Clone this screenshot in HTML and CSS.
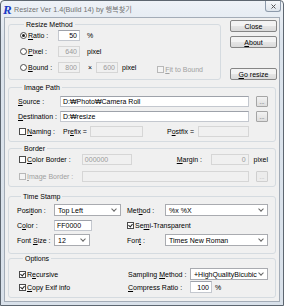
FILE: index.html
```html
<!DOCTYPE html>
<html lang="ko">
<head>
  <meta charset="UTF-8">
  <title>Resizer</title>
  <link rel="stylesheet" href="styles.css">
</head>
<body>
  <div class="window">
    <div class="titlebar">
      <span class="app-icon">R</span>
      <span class="title">Resizer Ver 1.4(Build 14) by 행복찾기</span>
      <span class="close-x">
        <svg width="5" height="5" viewBox="0 0 5 5"><path d="M0.5 0.5 L4.5 4.5 M4.5 0.5 L0.5 4.5" stroke="#555" stroke-width="1" fill="none"/></svg>
      </span>
    </div>

    <div class="client">
      <div class="top-row">
        <fieldset class="group resize">
          <legend>Resize Method</legend>
          <div class="row">
            <span class="rlabel"><span class="radio on"></span><u>R</u>atio :</span>
            <span class="box num w22">50</span>
            <span class="unit">%</span>
          </div>
          <div class="row">
            <span class="rlabel"><span class="radio"></span><u>P</u>ixel :</span>
            <span class="box num dis w22">640</span>
            <span class="unit">pixel</span>
          </div>
          <div class="row">
            <span class="rlabel"><span class="radio"></span><u>B</u>ound :</span>
            <span class="box num dis w22">800</span>
            <span class="times">×</span>
            <span class="box num dis w22">600</span>
            <span class="unit2">pixel</span>
            <span class="fit dim"><span class="cb dis"></span><u>F</u>it to Bound</span>
          </div>
        </fieldset>
        <div class="buttons">
          <span class="btn">Close</span>
          <span class="btn"><u>A</u>bout</span>
          <span class="btn go"><u>G</u>o resize</span>
        </div>
      </div>

      <fieldset class="group path">
        <legend>Image Path</legend>
        <div class="row">
          <span class="plabel"><u>S</u>ource :</span>
          <span class="box grow">D:₩Photo₩Camera Roll</span>
          <span class="dots">...</span>
        </div>
        <div class="row">
          <span class="plabel"><u>D</u>estination :</span>
          <span class="box grow">D:₩resize</span>
          <span class="dots">...</span>
        </div>
        <div class="row">
          <span class="nlabel"><span class="cb"></span><u>N</u>aming :</span>
          <span class="prefix">Pr<u>e</u>fix =</span>
          <span class="box dis w53"></span>
          <span class="postfix">P<u>o</u>stfix =</span>
          <span class="box dis w51"></span>
        </div>
      </fieldset>

      <fieldset class="group border">
        <legend>Border</legend>
        <div class="row">
          <span class="blabel"><span class="cb"></span><u>C</u>olor Border :</span>
          <span class="box dis w50">000000</span>
          <span class="mlabel"><u>M</u>argin :</span>
          <span class="box num dis w38">0</span>
          <span class="unit3">pixel</span>
        </div>
        <div class="row">
          <span class="blabel dim"><span class="cb dis"></span><u>I</u>mage Border :</span>
          <span class="box dis grow"></span>
          <span class="dots dis">...</span>
        </div>
      </fieldset>

      <fieldset class="group stamp">
        <legend>Time Stamp</legend>
        <div class="row tall">
          <span class="left">
            <span class="tlabel">Posi<u>t</u>ion :</span>
            <span class="combo w67">Top Left</span>
          </span>
          <span class="tlabel r">Met<u>h</u>od :</span>
          <span class="combo w103">%x %X</span>
        </div>
        <div class="row tall">
          <span class="left">
            <span class="tlabel">C<u>o</u>lor :</span>
            <span class="box w38">FF0000</span>
          </span>
          <span class="check"><span class="cb on"></span>Se<u>m</u>i-Transparent</span>
        </div>
        <div class="row tall">
          <span class="left">
            <span class="tlabel">Font <u>S</u>ize :</span>
            <span class="combo w36">12</span>
          </span>
          <span class="tlabel r">Fon<u>t</u> :</span>
          <span class="combo w103">Times New Roman</span>
        </div>
      </fieldset>

      <fieldset class="group options">
        <legend>Options</legend>
        <div class="row tall">
          <span class="oleft"><span class="cb on"></span>R<u>e</u>cursive</span>
          <span class="olabel">Sampling <u>M</u>ethod :</span>
          <span class="combo w78">+HighQualityBicubic</span>
        </div>
        <div class="row tall">
          <span class="oleft"><span class="cb on"></span><u>C</u>opy Exif info</span>
          <span class="olabel"><u>C</u>ompress Ratio :</span>
          <span class="box num w22 h12">100</span>
          <span class="pct">%</span>
        </div>
      </fieldset>
    </div>
  </div>
</body>
</html>
```

FILE: styles.css
```css
* {
  box-sizing: border-box;
}

body {
  margin: 0;
  font-family: "Liberation Sans", "Noto Sans CJK KR", sans-serif;
  font-size: 7px;
  color: #000;
  background: #fff;
}

u {
  text-decoration: underline;
  text-underline-offset: 1px;
}

.window {
  width: 284px;
  height: 306px;
  border: 1px solid #5d6670;
  border-radius: 4px 4px 0 0;
  background: linear-gradient(#eef2f7, #dce4ed 40px, #d9e1ea);
  display: flex;
  flex-direction: column;
}

.titlebar {
  height: 16px;
  display: flex;
  align-items: center;
  padding: 0 2px 0 2px;
}

.app-icon {
  font-family: "Liberation Serif", serif;
  font-style: italic;
  font-weight: bold;
  font-size: 13px;
  line-height: 13px;
  color: #1c3cc4;
  width: 10px;
}

.title {
  margin-left: 1px;
  font-size: 7.2px;
  color: #727272;
}

.close-x {
  margin-left: auto;
  align-self: flex-start;
  width: 16px;
  height: 11px;
  border: 1px solid #8d9aab;
  border-top: none;
  border-radius: 0 0 3px 3px;
  background: linear-gradient(#f5f7fa, #dfe5ec);
  display: flex;
  align-items: center;
  justify-content: center;
}

.client {
  margin: 0 3px 3px;
  flex: 1;
  border: 1px solid #a3acb7;
  background: #f0f0f0;
  padding: 2px 3px 0;
  display: flex;
  flex-direction: column;
}

/* group boxes */
.group {
  margin: 0;
  padding: 0;
  border: 1px solid #d5dbe0;
  border-radius: 3px;
  min-inline-size: 0;
}

.group legend {
  margin-left: 4px;
  padding: 0 2px;
  height: 9px;
  line-height: 9px;
}

.row {
  display: flex;
  align-items: center;
  height: 11px;
  white-space: nowrap;
}

.row.tall {
  height: 12px;
}

/* controls */
.box {
  height: 11px;
  border: 1px solid #c4c8cf;
  border-top-color: #9ea2aa;
  background: #fff;
  padding: 0 2px;
  display: flex;
  align-items: center;
  overflow: hidden;
}

.box.num {
  justify-content: flex-end;
}

.box.dis {
  background: #f0f0f0;
  color: #9a9a9a;
  border-color: #d6d6d6;
}

.box.h12 {
  height: 12px;
}

.grow {
  flex: 1;
}

.w22 { width: 22px; }
.w36 { width: 36px; }
.w38 { width: 38px; }
.w50 { width: 50px; }
.w51 { width: 51px; }
.w53 { width: 53px; }
.w67 { width: 67px; }
.w78 { width: 78px; }
.w103 { width: 103px; }

.combo {
  height: 12px;
  border: 1px solid #a9abb0;
  background: #fff;
  padding: 0 3px;
  display: flex;
  align-items: center;
}

.combo::after {
  content: "";
  margin-left: auto;
  margin-right: 1px;
  margin-top: -2px;
  width: 3px;
  height: 3px;
  border-right: 1px solid #666;
  border-bottom: 1px solid #666;
  transform: rotate(45deg);
}

.radio {
  width: 7px;
  height: 7px;
  margin-right: 1px;
  border: 1px solid #4b4b4b;
  border-radius: 50%;
  background: #fff;
  display: inline-flex;
  align-items: center;
  justify-content: center;
}

.radio.on::after {
  content: "";
  width: 3px;
  height: 3px;
  border-radius: 50%;
  background: #1e1e1e;
}

.cb {
  width: 7px;
  height: 7px;
  margin-right: 1px;
  border: 1px solid #4b4b4b;
  background: #fff;
  display: inline-block;
  position: relative;
}

.cb.on::after {
  content: "";
  position: absolute;
  left: 1px;
  top: 0;
  width: 2px;
  height: 3px;
  border-right: 1px solid #222;
  border-bottom: 1px solid #222;
  transform: rotate(40deg);
}

.cb.dis {
  border-color: #b8b8b8;
  background: #f4f4f4;
}

.dim {
  color: #a0a0a0;
}

.btn {
  height: 12px;
  border: 1px solid #858585;
  border-radius: 2px;
  background: linear-gradient(#f3f3f3 45%, #e4e4e4 55%, #dadada);
  display: flex;
  align-items: center;
  justify-content: center;
}

.dots {
  width: 12px;
  height: 11px;
  margin-left: 7px;
  border: 1px solid #a5a5a5;
  border-radius: 1px;
  background: linear-gradient(#f2f2f2, #dedede);
  display: flex;
  align-items: center;
  justify-content: center;
  font-size: 6px;
  line-height: 6px;
  color: #333;
}

.dots.dis {
  color: #aaa;
  border-color: #cfcfcf;
  background: #ececec;
}

/* resize method */
.top-row {
  display: flex;
  justify-content: space-between;
}

.resize {
  width: 213px;
  padding: 1px 0 6px 11px;
}

.resize .row + .row {
  margin-top: 5px;
}

.rlabel {
  width: 38px;
  display: flex;
  align-items: center;
}

.unit {
  margin-left: 7px;
}

.times {
  margin-left: 8px;
  width: 8px;
}

.unit2 {
  margin-left: 4px;
}

.fit {
  margin-left: auto;
  margin-right: 17px;
  margin-top: 3px;
  display: flex;
  align-items: center;
}

.buttons {
  width: 47px;
  margin-right: -1px;
  display: flex;
  flex-direction: column;
}

.buttons .btn + .btn {
  margin-top: 4px;
}

.buttons .go {
  margin-top: auto !important;
}

/* image path */
.path {
  margin-top: 3px;
  padding: 4px 7px 4px 9px;
}

.path .row + .row {
  margin-top: 4px;
}

.plabel {
  width: 42px;
}

.nlabel {
  width: 45px;
  padding-left: 1px;
  display: flex;
  align-items: center;
}

.prefix {
  width: 27px;
}

.postfix {
  margin-left: 24px;
  width: 31px;
}

/* border */
.border {
  margin-top: 2px;
  padding: 1px 7px 4px 9px;
}

.border .row + .row {
  margin-top: 6px;
}

.blabel {
  width: 64px;
  padding-left: 1px;
  display: flex;
  align-items: center;
}

.mlabel {
  margin-left: 45px;
  width: 34px;
}

.unit3 {
  margin-left: 5px;
}

/* time stamp */
.stamp {
  margin-top: 5px;
  padding: 3px 7px 7px 8px;
}

.stamp .row + .row {
  margin-top: 3px;
}

.left {
  width: 110px;
  display: flex;
  align-items: center;
}

.tlabel {
  width: 37px;
}

.tlabel.r {
  width: 38px;
}

.check {
  display: flex;
  align-items: center;
}

/* options */
.options {
  padding: 5px 7px 4px 10px;
}

.options .row + .row {
  margin-top: 1px;
}

.oleft {
  width: 109px;
  display: flex;
  align-items: center;
}

.olabel {
  width: 62px;
}

.pct {
  margin-left: 3px;
}
```
